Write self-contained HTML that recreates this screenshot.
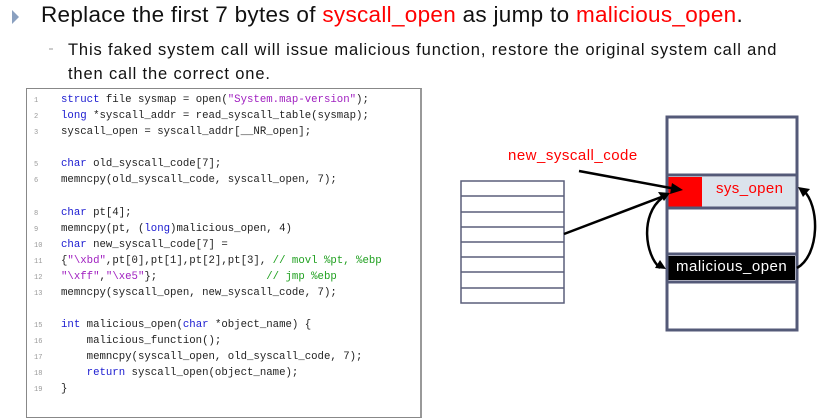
<!DOCTYPE html>
<html><head><meta charset="utf-8"><style>
body{margin:0;width:829px;height:402px;background:#fff;position:relative;overflow:hidden;font-family:"Liberation Sans",sans-serif}
.a{position:absolute;white-space:nowrap}
.code{position:absolute;left:26px;top:88px;width:396px;height:330px;border:1px solid #888;border-right:2px solid #999;box-sizing:border-box}
.ln{position:absolute;left:34px;font:7px "Liberation Mono",monospace;color:#999;white-space:nowrap}
.cl{position:absolute;left:61px;font:10.7px "Liberation Mono",monospace;color:#222;white-space:pre}
.k{color:#1a1ad0}.s{color:#a020c0}.c{color:#20a020}
.r{color:#f00}
</style></head><body>
<svg class="a" style="left:0;top:0" width="829" height="402">
<polygon points="12,10 19,17 12,24" fill="#8aa0c0"/>
<line x1="49" y1="49" x2="53" y2="49" stroke="#999" stroke-width="1"/>
<g stroke="#5a5f7a" stroke-width="1.5" fill="none">
<rect x="461" y="181" width="103" height="122"/>
<line x1="461" y1="196" x2="564" y2="196"/><line x1="461" y1="212" x2="564" y2="212"/>
<line x1="461" y1="227" x2="564" y2="227"/><line x1="461" y1="242" x2="564" y2="242"/>
<line x1="461" y1="257" x2="564" y2="257"/><line x1="461" y1="272" x2="564" y2="272"/>
<line x1="461" y1="288" x2="564" y2="288"/>
</g>
<rect x="667" y="177" width="129" height="30" fill="#dbe3ec"/>
<rect x="667" y="177" width="35" height="30" fill="#f00"/>
<rect x="668" y="256" width="127" height="24" fill="#000"/>
<g stroke="#545a78" stroke-width="3" fill="none">
<rect x="667" y="117" width="130" height="213"/>
<line x1="667" y1="175" x2="797" y2="175"/><line x1="667" y1="208" x2="797" y2="208"/>
<line x1="667" y1="254" x2="797" y2="254"/><line x1="667" y1="282" x2="797" y2="282"/>
</g>
<g stroke="#000" stroke-width="2.5" fill="none">
<line x1="579" y1="171" x2="676" y2="189"/>
<line x1="564" y1="234" x2="664" y2="196"/>
<path d="M662,198 C640,215 645,255 660,268"/>
<path d="M797,268 C820,255 820,205 803,190"/>
</g>
<polygon points="683,190 672,183 670,194" fill="#000"/>
<polygon points="670,193 658,192 664,201" fill="#000"/>
<polygon points="666,269 655,268 660,260" fill="#000"/>
<polygon points="798,187 810,189 803,197" fill="#000"/>
</svg>
<div class="a" style="left:41px;top:2px;font-size:22.5px;letter-spacing:0.3px;color:#111">Replace the first 7 bytes of <span class="r">syscall_open</span> as jump to <span class="r">malicious_open</span>.</div>
<div class="a" style="left:68px;top:38px;font-size:16.5px;letter-spacing:0.85px;color:#111;line-height:24px">This faked system call will issue malicious function, restore the original system call and<br>then call the correct one.</div>
<div class="code"></div>
<div class="ln" style="top:97px">1</div><div class="cl" style="top:94px"><span class="k">struct</span> file sysmap = open(<span class="s">"System.map-version"</span>);</div>
<div class="ln" style="top:113px">2</div><div class="cl" style="top:110px"><span class="k">long</span> *syscall_addr = read_syscall_table(sysmap);</div>
<div class="ln" style="top:129px">3</div><div class="cl" style="top:126px">syscall_open = syscall_addr[__NR_open];</div>
<div class="ln" style="top:161px">5</div><div class="cl" style="top:158px"><span class="k">char</span> old_syscall_code[7];</div>
<div class="ln" style="top:177px">6</div><div class="cl" style="top:174px">memncpy(old_syscall_code, syscall_open, 7);</div>
<div class="ln" style="top:210px">8</div><div class="cl" style="top:207px"><span class="k">char</span> pt[4];</div>
<div class="ln" style="top:226px">9</div><div class="cl" style="top:223px">memncpy(pt, (<span class="k">long</span>)malicious_open, 4)</div>
<div class="ln" style="top:242px">10</div><div class="cl" style="top:239px"><span class="k">char</span> new_syscall_code[7] =</div>
<div class="ln" style="top:258px">11</div><div class="cl" style="top:255px">{<span class="s">"\xbd"</span>,pt[0],pt[1],pt[2],pt[3], <span class="c">// movl %pt, %ebp</span></div>
<div class="ln" style="top:274px">12</div><div class="cl" style="top:271px"><span class="s">"\xff"</span>,<span class="s">"\xe5"</span>};                 <span class="c">// jmp %ebp</span></div>
<div class="ln" style="top:290px">13</div><div class="cl" style="top:287px">memncpy(syscall_open, new_syscall_code, 7);</div>
<div class="ln" style="top:322px">15</div><div class="cl" style="top:319px"><span class="k">int</span> malicious_open(<span class="k">char</span> *object_name) {</div>
<div class="ln" style="top:338px">16</div><div class="cl" style="top:335px">    malicious_function();</div>
<div class="ln" style="top:354px">17</div><div class="cl" style="top:351px">    memncpy(syscall_open, old_syscall_code, 7);</div>
<div class="ln" style="top:370px">18</div><div class="cl" style="top:367px">    <span class="k">return</span> syscall_open(object_name);</div>
<div class="ln" style="top:386px">19</div><div class="cl" style="top:383px">}</div>
<div class="a r" style="left:508px;top:147px;font-size:15px;letter-spacing:0.5px">new_syscall_code</div>
<div class="a r" style="left:716px;top:180px;font-size:15px;letter-spacing:0.4px">sys_open</div>
<div class="a" style="left:676px;top:258px;font-size:15px;letter-spacing:0.5px;color:#fff">malicious_open</div>
</body></html>
